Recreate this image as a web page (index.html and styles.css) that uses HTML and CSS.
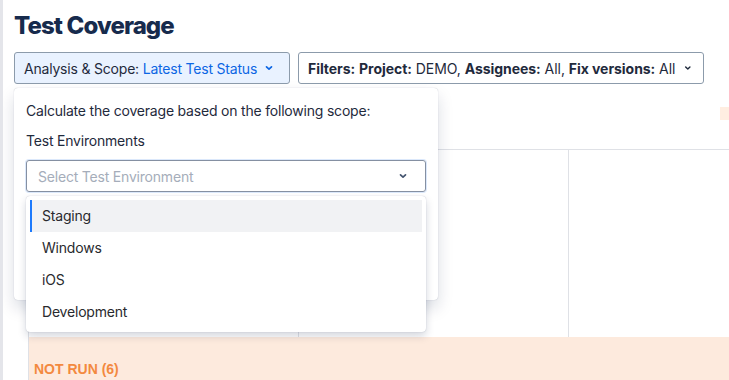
FILE: index.html
```html
<!DOCTYPE html>
<html lang="en">
<head>
    <meta charset="UTF-8">
    <meta name="viewport" content="width=device-width, initial-scale=1.0">
    <title>Test Coverage</title>
    <link rel="stylesheet" href="styles.css">
</head>
<body>
    <div class="app">
        <div class="rail"></div>
        <main class="page">
            <h1 class="title">Test Coverage</h1>
            <div class="toolbar">
                <button class="scope-btn">
                    <span>Analysis &amp; Scope: <span class="accent">Latest Test Status</span></span>
                    <svg class="chev" width="16" height="16" viewBox="0 0 16 16"><path d="M5.5 6.8l2.5 2.4 2.5-2.4" fill="none" stroke="currentColor" stroke-width="1.7" stroke-linecap="round" stroke-linejoin="round"/></svg>
                </button>
                <button class="filter-btn">
                    <span><b>Filters:</b> <b>Project:</b> DEMO, <b>Assignees:</b> All, <b>Fix versions:</b> All</span>
                    <svg class="chev" width="16" height="16" viewBox="0 0 16 16"><path d="M5.5 6.8l2.5 2.4 2.5-2.4" fill="none" stroke="currentColor" stroke-width="1.7" stroke-linecap="round" stroke-linejoin="round"/></svg>
                </button>
            </div>

            <div class="board">
                <div class="legend"><span class="swatch"></span></div>
                <div class="grid">
                    <div class="cell"></div>
                    <div class="cell"></div>
                    <div class="cell"></div>
                </div>
                <div class="status-row"><span class="status-label">NOT RUN (6)</span></div>
            </div>

            <!-- scope popover -->
            <div class="popover">
                <p class="hint">Calculate the coverage based on the following scope:</p>
                <label class="field-label">Test Environments</label>
                <div class="select">
                    <span class="placeholder">Select Test Environment</span>
                    <svg class="chev select-chev" width="16" height="16" viewBox="0 0 16 16"><path d="M5.5 6.8l2.5 2.4 2.5-2.4" fill="none" stroke="currentColor" stroke-width="1.7" stroke-linecap="round" stroke-linejoin="round"/></svg>
                </div>
            </div>

            <ul class="menu">
                <li class="option active">Staging</li>
                <li class="option">Windows</li>
                <li class="option">iOS</li>
                <li class="option">Development</li>
            </ul>
        </main>
    </div>
</body>
</html>
```

FILE: styles.css
```css
html, body {
    margin: 0;
    height: 100%;
    overflow: hidden;
}
body {
    font-family: Inter, "Noto Sans", "Liberation Sans", sans-serif;
    font-size: 14px;
    letter-spacing: -0.2px;
    color: #172b4d;
    background: #fff;
}
.app {
    display: flex;
    height: 100%;
}
.rail {
    width: 3px;
    flex: none;
    background: #e4e5ea;
}
.page {
    position: relative;
    flex: 1;
    padding: 12px 0 0 11px;
    overflow: hidden;
}
.title {
    margin: 0;
    font-size: 24px;
    line-height: 28px;
    font-weight: 800;
    letter-spacing: -0.9px;
    color: #172b4d;
}
.toolbar {
    display: flex;
    gap: 8px;
    margin-top: 12px;
}
.toolbar button {
    display: flex;
    align-items: center;
    height: 32px;
    box-sizing: border-box;
    padding: 0 8px 0 9px;
    border-radius: 3px;
    font-family: inherit;
    font-size: 14px;
    letter-spacing: -0.2px;
    color: #1f2a3c;
    white-space: nowrap;
}
.scope-btn {
    width: 276px;
    background: #e9f2ff;
    border: 1px solid #8c9bab;
}
.scope-btn .accent,
.scope-btn .chev {
    color: #0c66e4;
}
.scope-btn .chev {
    margin-left: 4px;
}
.filter-btn {
    width: 406px;
    background: #fff;
    border: 1px solid #8c9bab;
}
.toolbar .filter-btn {
    letter-spacing: -0.05px;
}
.filter-btn b {
    font-weight: 700;
}
.filter-btn .chev {
    margin-left: 6px;
}

.board {
    width: 720px;
    margin: 22px 0 0 14px;
}
.legend {
    display: flex;
    justify-content: flex-end;
    height: 43px;
    padding-right: 16px;
}
.swatch {
    width: 12px;
    height: 13px;
    margin-top: 1px;
    background: #ffeee1;
}
.grid {
    display: grid;
    grid-template-columns: 270px 270px 1fr;
    border-top: 1px solid #dfe1e6;
    border-left: 1px solid #dfe1e6;
}
.cell {
    height: 187px;
    box-sizing: border-box;
    border-right: 1px solid #dfe1e6;
}
.status-row {
    height: 60px;
    padding: 23px 0 0 5px;
    background: #fdeadd;
    border-left: 1px solid #dfe1e6;
}
.status-label {
    font-family: "Liberation Sans", Arial, sans-serif;
    font-size: 14px;
    letter-spacing: 0;
    font-weight: 700;
    color: #f3893f;
}

.popover {
    position: absolute;
    top: 88px;
    left: 11px;
    width: 424px;
    height: 212px;
    box-sizing: border-box;
    padding: 13px 12px 0;
    background: #fff;
    border-radius: 4px;
    box-shadow: 0 8px 16px rgba(9, 30, 66, 0.15), 0 0 1px rgba(9, 30, 66, 0.3);
}
.hint {
    margin: 0;
    line-height: 20px;
    color: #1f2a3c;
}
.field-label {
    display: block;
    margin-top: 10px;
    line-height: 20px;
    color: #1f2a3c;
}
.select {
    display: flex;
    align-items: center;
    justify-content: space-between;
    height: 32px;
    box-sizing: border-box;
    margin-top: 9px;
    padding: 0 14px 0 11px;
    border: 1px solid #8590a2;
    border-radius: 3px;
    box-shadow: 0 0 0 1px #dbe8fb;
}
.placeholder {
    color: #a5adba;
}
.select-chev {
    color: #44546f;
}

.menu {
    position: absolute;
    top: 196px;
    left: 23px;
    width: 400px;
    box-sizing: border-box;
    margin: 0;
    padding: 4px;
    list-style: none;
    background: #fff;
    border-radius: 4px;
    box-shadow: 0 4px 8px rgba(9, 30, 66, 0.18), 0 0 1px rgba(9, 30, 66, 0.3);
}
.option {
    height: 32px;
    line-height: 32px;
    padding-left: 10px;
    border-left: 2px solid transparent;
    color: #292a2e;
}
.option.active {
    background: #f1f2f4;
    border-left-color: #1d7afc;
}
```
